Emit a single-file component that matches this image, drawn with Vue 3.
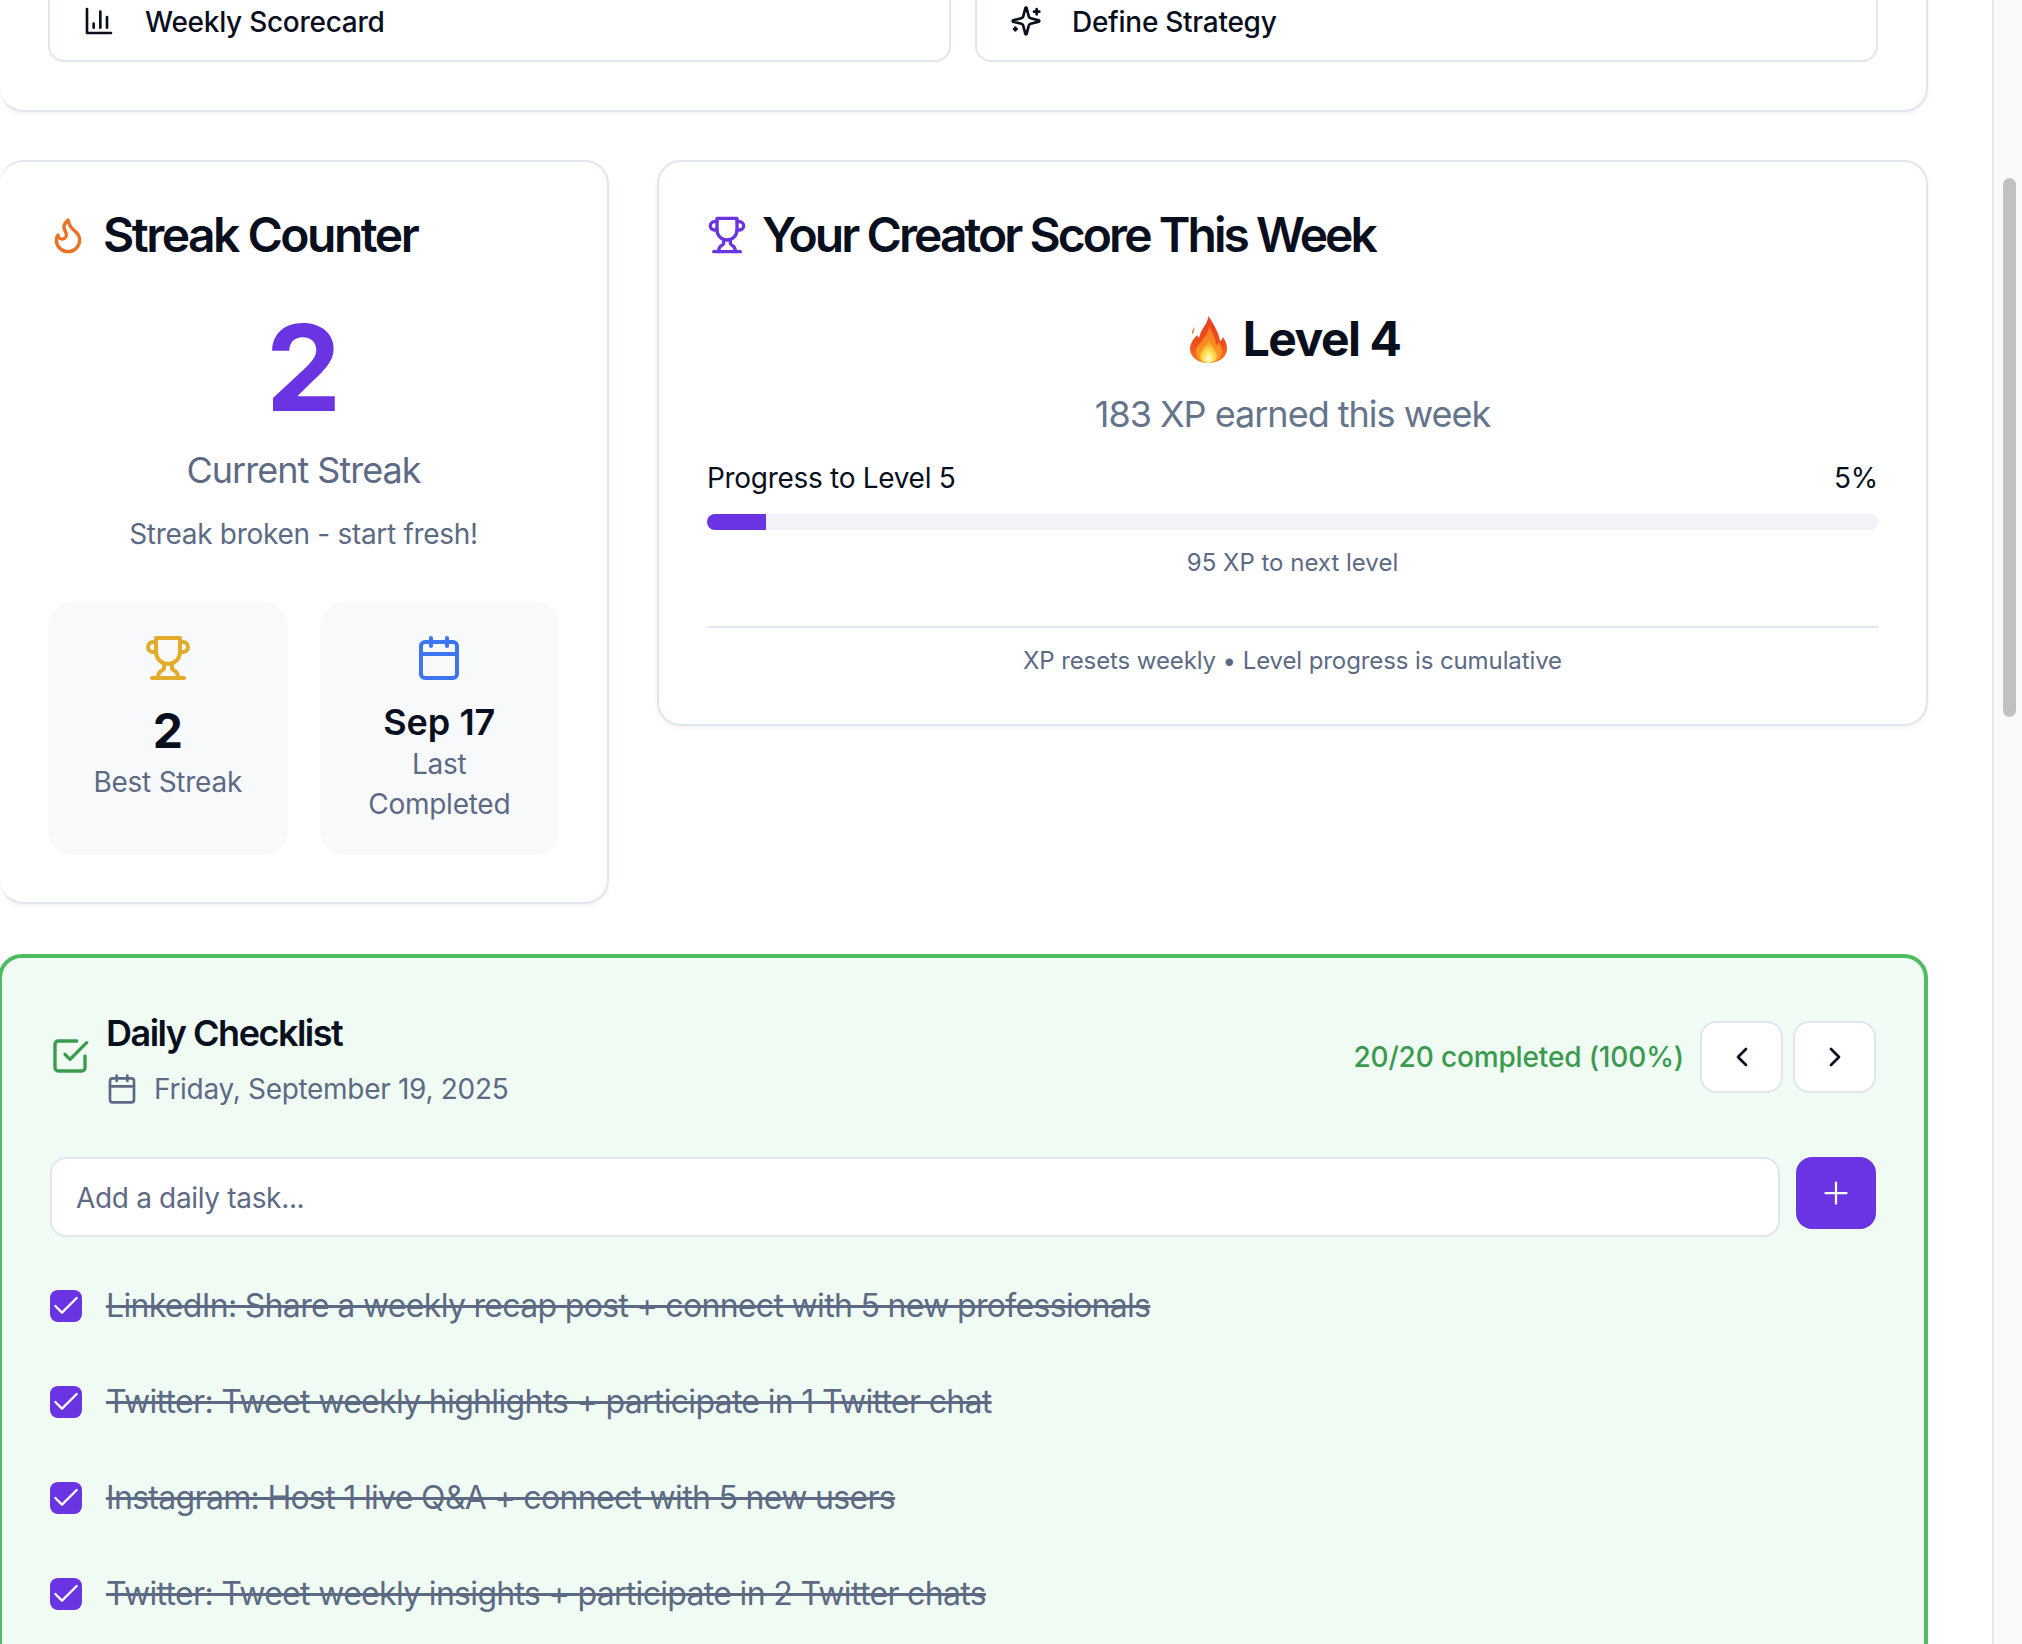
<template>
<div class="page">
    <div class="main">
        <!-- top card is scrolled past the viewport, only its lower part shows -->
        <section class="actions-card">
            <div class="action-grid">
                <div v-for="a in actions" :key="a.label" class="action-btn">
                    <svg class="action-icon" viewBox="0 0 24 24" fill="none" stroke="currentColor" stroke-width="2" stroke-linecap="round" stroke-linejoin="round">
                        <path v-for="d in a.paths" :key="d" :d="d" />
                    </svg>
                    <span>{{ a.label }}</span>
                </div>
            </div>
        </section>

        <div class="score-row">
            <section class="card streak-card">
                <h3 class="card-title">
                    <svg class="title-icon flame" viewBox="0 0 24 24" fill="none" stroke="currentColor" stroke-width="2" stroke-linecap="round" stroke-linejoin="round">
                        <path d="M8.5 14.5A2.5 2.5 0 0 0 11 12c0-1.38-.5-2-1-3-1.072-2.143-.224-4.054 2-6 .5 2.5 2 4.9 4 6.5 2 1.6 3 3.5 3 5.5a7 7 0 1 1-14 0c0-1.153.433-2.294 1-3a2.5 2.5 0 0 0 2.5 2.5z" />
                    </svg>
                    Streak Counter
                </h3>
                <div class="streak-number">2</div>
                <div class="streak-label">Current Streak</div>
                <div class="streak-note">Streak broken - start fresh!</div>
                <div class="stat-grid">
                    <div class="stat-box">
                        <svg class="stat-icon gold" viewBox="0 0 24 24" fill="none" stroke="currentColor" stroke-width="2" stroke-linecap="round" stroke-linejoin="round">
                            <path v-for="d in trophy" :key="d" :d="d" />
                        </svg>
                        <div class="stat-value big">2</div>
                        <div class="stat-label">Best Streak</div>
                    </div>
                    <div class="stat-box">
                        <svg class="stat-icon blue" viewBox="0 0 24 24" fill="none" stroke="currentColor" stroke-width="2" stroke-linecap="round" stroke-linejoin="round">
                            <rect x="3" y="4" width="18" height="18" rx="2" />
                            <path d="M16 2v4M8 2v4M3 10h18" />
                        </svg>
                        <div class="stat-value">Sep 17</div>
                        <div class="stat-label">Last Completed</div>
                    </div>
                </div>
            </section>

            <section class="card level-card">
                <h3 class="card-title">
                    <svg class="title-icon purple" viewBox="0 0 24 24" fill="none" stroke="currentColor" stroke-width="2" stroke-linecap="round" stroke-linejoin="round">
                        <path v-for="d in trophy" :key="d" :d="d" />
                    </svg>
                    Your Creator Score This Week
                </h3>
                <div class="level-name">
                    <svg class="fire" viewBox="0 0 37 47">
                        <defs>
                            <linearGradient id="fireOuter" x1="0" y1="0" x2="0" y2="1">
                                <stop offset="0" stop-color="#e8401f" />
                                <stop offset="0.6" stop-color="#ee4f1c" />
                                <stop offset="1" stop-color="#f7831f" />
                            </linearGradient>
                            <linearGradient id="fireMid" x1="0" y1="0" x2="0" y2="1">
                                <stop offset="0" stop-color="#f6761f" />
                                <stop offset="1" stop-color="#fba326" />
                            </linearGradient>
                            <radialGradient id="fireCore" cx="0.5" cy="0.8" r="0.62">
                                <stop offset="0" stop-color="#fffde0" />
                                <stop offset="0.45" stop-color="#ffe35c" />
                                <stop offset="1" stop-color="#fbab28" />
                            </radialGradient>
                        </defs>
                        <path d="M4.500 11c-1 2-3 4-2.500 7.500 1-1.500 2.500-3.500 2.500-7.500z" fill="#f2692a" />
                        <path d="M18.500 0c-1 6-3 8-6 13-2 3-3 7-3.500 9-1-1-1.500-2-1.500-3C3 23 0 28 0 33c0 8 8 14 18.500 14S37 41 37 33c0-5-2-9-4-12-.5 2-1.500 3-3 4C29 17 24 9 18.500 0z" fill="url(#fireOuter)" />
                        <path d="M19 10c0 6-4 10-7 15-2 3-6 5-6 10 0 7 6 12 12.500 12S32 42 32 35c0-4-2-6-3-9-1 2-2 3-3 3 0-7-4-13-7-19z" fill="url(#fireMid)" />
                        <path d="M19 24c-1 4-4 6-5.500 9S10 37 10 40c0 4 4 7 8.500 7s8.500-3 8.500-7c0-3-2-5-3.500-8-1-2-3.500-5-4.500-8z" fill="url(#fireCore)" />
                    </svg>
                    <span>Level 4</span>
                </div>
                <div class="level-xp">183 XP earned this week</div>
                <div class="progress-head">
                    <span>Progress to Level 5</span>
                    <span>5%</span>
                </div>
                <div class="progress-track">
                    <div class="progress-fill" :style="{ width: progress + '%' }"></div>
                </div>
                <div class="progress-note">95 XP to next level</div>
                <div class="level-foot">XP resets weekly • Level progress is cumulative</div>
            </section>
        </div>

        <section class="checklist">
            <div class="check-head">
                <div class="check-title-wrap">
                    <svg class="check-icon" viewBox="0 0 24 24" fill="none" stroke="currentColor" stroke-width="2" stroke-linecap="round" stroke-linejoin="round">
                        <path d="m9 11 3 3L22 4" />
                        <path d="M21 12v7a2 2 0 0 1-2 2H5a2 2 0 0 1-2-2V5a2 2 0 0 1 2-2h11" />
                    </svg>
                    <div>
                        <h3 class="check-title">Daily Checklist</h3>
                        <div class="check-date">
                            <svg class="date-icon" viewBox="0 0 24 24" fill="none" stroke="currentColor" stroke-width="2" stroke-linecap="round" stroke-linejoin="round">
                                <rect x="3" y="4" width="18" height="18" rx="2" />
                                <path d="M16 2v4M8 2v4M3 10h18" />
                            </svg>
                            Friday, September 19, 2025
                        </div>
                    </div>
                </div>
                <div class="check-side">
                    <span class="check-count">20/20 completed (100%)</span>
                    <button class="nav-btn">
                        <svg viewBox="0 0 24 24" fill="none" stroke="currentColor" stroke-width="2" stroke-linecap="round" stroke-linejoin="round"><path d="m15 18-6-6 6-6" /></svg>
                    </button>
                    <button class="nav-btn">
                        <svg viewBox="0 0 24 24" fill="none" stroke="currentColor" stroke-width="2" stroke-linecap="round" stroke-linejoin="round"><path d="m9 18 6-6-6-6" /></svg>
                    </button>
                </div>
            </div>

            <div class="add-row">
                <input class="add-input" placeholder="Add a daily task..." />
                <button class="add-btn">
                    <svg viewBox="0 0 24 24" fill="none" stroke="currentColor" stroke-width="1.5" stroke-linecap="round" stroke-linejoin="round"><path d="M5 12h14M12 5v14" /></svg>
                </button>
            </div>

            <div v-for="t in tasks" :key="t" class="task">
                <span class="task-box">
                    <svg viewBox="0 0 24 24" fill="none" stroke="currentColor" stroke-width="1.7" stroke-linecap="round" stroke-linejoin="round"><path d="M20 6 9 17l-5-5" /></svg>
                </span>
                <span class="task-text">{{ t }}</span>
            </div>
        </section>
    </div>
    <div class="scroll-track">
        <div class="scroll-thumb"></div>
    </div>
</div>
</template>

<script setup>
const progress = 5

const trophy = [
    'M6 9H4.5a2.5 2.5 0 0 1 0-5H6',
    'M18 9h1.5a2.5 2.5 0 0 0 0-5H18',
    'M4 22h16',
    'M10 14.66V17c0 .55-.47.98-.97 1.21C7.85 18.75 7 20.24 7 22',
    'M14 14.66V17c0 .55.47.98.97 1.21C16.15 18.75 17 20.24 17 22',
    'M18 2H6v7a6 6 0 0 0 12 0V2Z'
]

const actions = [
    {
        label: 'Weekly Scorecard',
        paths: ['M3 3v18h18', 'M18 17V9', 'M13 17V5', 'M8 17v-3']
    },
    {
        label: 'Define Strategy',
        paths: [
            'M9.937 15.5A2 2 0 0 0 8.5 14.063l-6.135-1.582a.5.5 0 0 1 0-.962L8.5 9.936A2 2 0 0 0 9.937 8.5l1.582-6.135a.5.5 0 0 1 .963 0L14.063 8.5A2 2 0 0 0 15.5 9.937l6.135 1.581a.5.5 0 0 1 0 .964L15.5 14.063a2 2 0 0 0-1.437 1.437l-1.582 6.135a.5.5 0 0 1-.963 0z',
            'M20 3v4', 'M22 5h-4', 'M4 17v2', 'M5 18H3'
        ]
    }
]

const tasks = [
    'LinkedIn: Share a weekly recap post + connect with 5 new professionals',
    'Twitter: Tweet weekly highlights + participate in 1 Twitter chat',
    'Instagram: Host 1 live Q&A + connect with 5 new users',
    'Twitter: Tweet weekly insights + participate in 2 Twitter chats'
]
</script>

<style>
html, body {
    margin: 0;
    background: #fff;
    overflow: hidden;
}
</style>

<style scoped>
.page {
    display: flex;
    width: 2022px;
    height: 1644px;
    overflow: hidden;
    font-family: Inter, "Liberation Sans", sans-serif;
    color: #0a0f1e;
    background: #fff;
}
.main {
    width: 1928px;
    margin-right: 64px;
    flex: none;
}
.actions-card {
    box-sizing: border-box;
    height: 112px;
    padding: 0 48px;
    background: #fff;
    border: 2px solid #e1e5f0;
    border-top: none;
    border-left: none;
    border-radius: 0 0 24px 24px;
    box-shadow: 0 2px 4px rgba(15, 23, 42, 0.05);
}
.action-grid {
    display: grid;
    grid-template-columns: 1fr 1fr;
    gap: 24px;
}
.action-btn {
    box-sizing: border-box;
    height: 62px;
    display: flex;
    align-items: flex-start;
    gap: 30px;
    padding: 5px 0 0 33px;
    border: 2px solid #e1e5f0;
    border-top: none;
    border-radius: 0 0 16px 16px;
    font-size: 28px;
    line-height: 35px;
    font-weight: 500;
    letter-spacing: -0.27px;
}
.action-icon {
    width: 32px;
    height: 32px;
    flex: none;
}
.score-row {
    display: flex;
    align-items: flex-start;
    gap: 48px;
    margin-top: 48px;
}
.card {
    box-sizing: border-box;
    background: #fff;
    border: 2px solid #e1e5f0;
    border-radius: 24px;
    box-shadow: 0 2px 4px rgba(15, 23, 42, 0.05);
}
.streak-card {
    width: 609px;
    height: 744px;
    padding: 49px 48px 48px;
    border-left: none;
}
.level-card {
    flex: 1;
    height: 566px;
    padding: 49px 48px 0;
}
.card-title {
    display: flex;
    align-items: center;
    gap: 15px;
    margin: 0;
    font-size: 48px;
    line-height: 48px;
    font-weight: 600;
    letter-spacing: -2.5px;
}
.level-card .card-title {
    letter-spacing: -2.95px;
}
.title-icon {
    width: 40px;
    height: 40px;
    flex: none;
}
.flame { color: #ea7224; }
.purple { color: #6a34e2; }
.streak-number {
    margin-top: 49px;
    text-align: center;
    font-size: 120px;
    line-height: 120px;
    font-weight: 700;
    color: #6a34e2;
}
.streak-label {
    margin-top: 18px;
    text-align: center;
    font-size: 36px;
    line-height: 48px;
    letter-spacing: -1px;
    color: #5c6a84;
}
.streak-note {
    margin-top: 20px;
    text-align: center;
    font-size: 28px;
    line-height: 40px;
    letter-spacing: -0.3px;
    color: #5c6a84;
}
.stat-grid {
    display: grid;
    grid-template-columns: 1fr 1fr;
    gap: 32px;
    margin-top: 48px;
}
.stat-box {
    box-sizing: border-box;
    height: 253px;
    padding: 32px;
    background: #f8f9fb;
    border-radius: 24px;
    text-align: center;
}
.stat-icon {
    display: block;
    width: 48px;
    height: 48px;
    margin: 0 auto 12px;
}
.gold { color: #e3ad2b; }
.blue { color: #3f74f0; }
.stat-value {
    margin-top: 18px;
    font-size: 36px;
    line-height: 44px;
    font-weight: 600;
}
.stat-value.big {
    margin-top: 18px;
    font-size: 48px;
    line-height: 62px;
    font-weight: 700;
}
.stat-label {
    font-size: 28px;
    line-height: 40px;
    letter-spacing: -0.25px;
    color: #5c6a84;
}
.level-name {
    display: flex;
    align-items: center;
    justify-content: center;
    gap: 16px;
    margin-top: 48px;
    padding-left: 5px;
    font-size: 48px;
    line-height: 64px;
    font-weight: 700;
    letter-spacing: -1.5px;
}
.fire {
    width: 37px;
    height: 47px;
}
.level-xp {
    margin-top: 19px;
    text-align: center;
    font-size: 36px;
    line-height: 48px;
    letter-spacing: -1px;
    color: #64748b;
}
.progress-head {
    display: flex;
    justify-content: space-between;
    margin-top: 20px;
    font-size: 28px;
    line-height: 40px;
    font-weight: 400;
    letter-spacing: -0.3px;
}
.progress-track {
    height: 16px;
    margin-top: 16px;
    background: #f1f3f8;
    border-radius: 8px;
    overflow: hidden;
}
.progress-fill {
    height: 100%;
    background: #6a34e2;
}
.progress-note {
    margin-top: 17px;
    text-align: center;
    font-size: 24px;
    line-height: 32px;
    color: #5c6a84;
}
.level-foot {
    margin-top: 47px;
    padding-top: 17px;
    border-top: 2px solid #e1e5f0;
    text-align: center;
    font-size: 24px;
    line-height: 32px;
    letter-spacing: -0.1px;
    color: #5c6a84;
}
.checklist {
    box-sizing: border-box;
    height: 900px;
    margin: 50px 0 0 -2px;
    padding: 55px 48px 0 48px;
    background: #f0fbf4;
    border: 4px solid #4ebc60;
    border-radius: 24px;
}
.check-head {
    display: flex;
    align-items: center;
    justify-content: space-between;
}
.check-title-wrap {
    display: flex;
    align-items: center;
    gap: 16px;
}
.check-icon {
    width: 40px;
    height: 40px;
    margin-bottom: 10px;
    color: #3a9a4e;
    flex: none;
}
.check-title {
    margin: 0;
    font-size: 36px;
    line-height: 40px;
    font-weight: 600;
    letter-spacing: -1.5px;
}
.check-date {
    display: flex;
    align-items: center;
    gap: 16px;
    margin-top: 16px;
    font-size: 28px;
    line-height: 40px;
    letter-spacing: -0.3px;
    color: #5c6a84;
}
.date-icon {
    width: 32px;
    height: 32px;
}
.check-side {
    display: flex;
    align-items: center;
    gap: 10px;
    margin-bottom: 8px;
}
.check-count {
    margin-right: 6px;
    font-size: 28px;
    font-weight: 500;
    letter-spacing: -0.15px;
    color: #3a9a4e;
}
.nav-btn {
    box-sizing: border-box;
    width: 83px;
    height: 72px;
    display: flex;
    align-items: center;
    justify-content: center;
    padding: 0;
    background: #fff;
    border: 2px solid #e1e5f0;
    border-radius: 16px;
    color: #0a0f1e;
}
.nav-btn svg {
    width: 32px;
    height: 32px;
}
.add-row {
    display: flex;
    align-items: flex-start;
    gap: 16px;
    margin-top: 48px;
    margin-bottom: 53px;
}
.add-input {
    box-sizing: border-box;
    flex: 1;
    min-width: 0;
    height: 80px;
    padding: 2px 24px 0;
    background: #fff;
    border: 2px solid #e1e5f0;
    border-radius: 16px;
    font-family: inherit;
    font-size: 28px;
    letter-spacing: -0.33px;
    outline: none;
}
.add-input::placeholder {
    color: #5c6a84;
    opacity: 1;
}
.add-btn {
    width: 80px;
    height: 72px;
    display: flex;
    align-items: center;
    justify-content: center;
    padding: 0;
    background: #6a34e2;
    border: none;
    border-radius: 16px;
    color: #fff;
}
.add-btn svg {
    width: 36px;
    height: 36px;
}
.task {
    display: flex;
    align-items: center;
    gap: 24px;
    height: 32px;
    margin-bottom: 64px;
}
.task-box {
    width: 32px;
    height: 32px;
    display: flex;
    align-items: center;
    justify-content: center;
    background: #6a34e2;
    border-radius: 8px;
    color: #fff;
    flex: none;
}
.task-box svg {
    width: 32px;
    height: 32px;
}
.task-text {
    font-size: 32px;
    line-height: 48px;
    letter-spacing: -0.68px;
    color: #5c6a84;
    text-decoration: line-through;
}
.scroll-track {
    box-sizing: border-box;
    width: 30px;
    flex: none;
    padding: 178px 6px 0 9px;
    background: #fafafa;
    border-left: 2px solid #e8e8e8;
}
.scroll-thumb {
    height: 539px;
    background: #c1c1c1;
    border-radius: 8px;
}
</style>
